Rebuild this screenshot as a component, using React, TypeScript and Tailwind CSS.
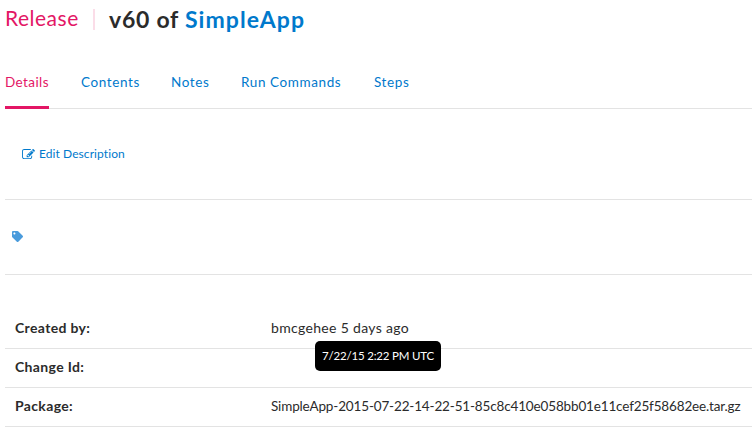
import { FaTag } from "react-icons/fa";

function EditIcon() {
  return (
    <svg viewBox="0 0 1792 1536" className="h-[11px] w-[13px] shrink-0" fill="currentColor" aria-hidden="true">
      <path d="M888 1056l116-116-152-152-116 116v56h96v96h56zm440-720q-16-16-33 1l-350 350q-17 17-1 33t33-1l350-350q17-17 1-33zm80 594v190q0 119-84.500 203.500t-203.500 84.500h-832q-119 0-203.500-84.500t-84.500-203.500v-832q0-119 84.500-203.500t203.500-84.500h832q63 0 117 25 15 7 18 23 3 17-9 29l-49 49q-14 14-32 8-23-6-45-6h-832q-66 0-113 47t-47 113v832q0 66 47 113t113 47h832q66 0 113-47t47-113v-126q0-13 9-22l64-64q15-15 35-7t20 29zm-96-738l288 288-672 672h-288v-288zm444 132l-92 92-288-288 92-92q28-28 68-28t68 28l152 152q28 28 28 68t-28 68z" />
    </svg>
  );
}

const tabs = [
  { label: "Details", width: "w-[44px]", active: true },
  { label: "Contents", width: "w-[58px]", active: false },
  { label: "Notes", width: "w-[38px]", active: false },
  { label: "Run Commands", width: "w-[101px]", active: false },
  { label: "Steps", width: "w-[36px]", active: false },
];

export default function App() {
  return (
    <main className="h-[433px] w-[752px] overflow-hidden bg-white pl-[5px] font-['Lato',sans-serif] text-[14px] text-[#2b2b2b]">
      <header className="flex h-[39px] items-center whitespace-nowrap">
        <span className="w-[88px] pb-[3px] text-[21px] leading-[36px] tracking-[0.5px] text-[#e31665]">Release</span>
        <span className="mr-[14px] h-[21px] w-[2px] bg-[#fbdde8]" />
        <h1 className="text-[23px] font-bold leading-[39px] tracking-[0.75px]">
          v60 of <a className="tracking-[1.05px] text-[#0079cc]">SimpleApp</a>
        </h1>
      </header>

      <nav className="mt-[18px] flex h-[52px] gap-8 border-b border-[#e3e3e3]">
        {tabs.map((tab) => (
          <a
            key={tab.label}
            className={`h-[52px] shrink-0 whitespace-nowrap text-[13.5px] leading-[51px] ${tab.width} ${
              tab.active
                ? "border-b-[3px] border-[#e31665] tracking-[0.4px] text-[#e31665]"
                : "tracking-[0.6px] text-[#0079cc]"
            }`}
          >
            {tab.label}
          </a>
        ))}
      </nav>

      <section className="flex h-[91px] items-center border-b border-[#e3e3e3] pl-[17px] text-[#0079cc]">
        <a className="flex items-center gap-1 text-[12px]">
          <EditIcon />
          <span className="tracking-[0.08px]">Edit Description</span>
        </a>
      </section>

      <section className="flex h-[75px] items-center border-b border-[#e3e3e3] pb-[2px] pl-[7px]">
        <FaTag className="size-[11px] text-[#4a9bdc]" />
      </section>

      <dl className="mt-[35px] whitespace-nowrap">
        <div className="flex h-[39px] items-center border-b border-[#e3e3e3] pb-[3px] pl-[10px]">
          <dt className="w-[256px] shrink-0 font-bold tracking-[0.35px]">Created by:</dt>
          <dd className="relative tracking-[0.32px]">
            bmcgehee 5 days ago
            <span
              role="tooltip"
              className="absolute left-[44px] top-[24px] flex h-[30px] w-[126px] items-center justify-center rounded-[5px] bg-black text-[11.5px] tracking-[-0.2px] text-white"
            >
              7/22/15 2:22 PM UTC
            </span>
          </dd>
        </div>
        <div className="flex h-[39px] items-center border-b border-[#e3e3e3] pb-[3px] pl-[10px]">
          <dt className="font-bold tracking-[0.35px]">Change Id:</dt>
        </div>
        <div className="flex h-[39px] items-center border-b border-[#e3e3e3] pb-[3px] pl-[10px]">
          <dt className="w-[256px] shrink-0 font-bold tracking-[0.35px]">Package:</dt>
          <dd className="pt-[2px] text-[13.5px] tracking-[-0.15px]">
            SimpleApp-2015-07-22-14-22-51-85c8c410e058bb01e11cef25f58682ee.tar.gz
          </dd>
        </div>
      </dl>
    </main>
  );
}
